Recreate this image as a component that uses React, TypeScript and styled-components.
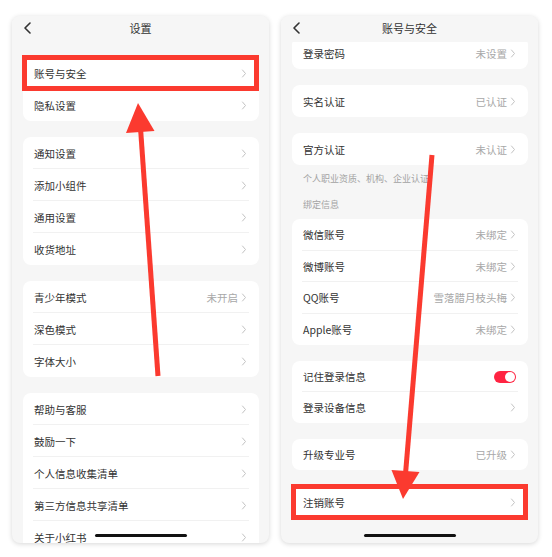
import React from "react";
import styled, { createGlobalStyle } from "styled-components";

const GlobalStyle = createGlobalStyle`
  html, body {
    margin: 0;
    padding: 0;
    background: #ffffff;
  }
  body {
    font-family: "Noto Sans CJK SC", "Noto Sans", sans-serif;
    color: #333333;
  }
`;

type Item = {
  label: string;
  value?: string;
  toggle?: boolean;
  marked?: boolean;
};

const leftGroups: Item[][] = [
  [{ label: "账号与安全", marked: true }, { label: "隐私设置" }],
  [
    { label: "通知设置" },
    { label: "添加小组件" },
    { label: "通用设置" },
    { label: "收货地址" },
  ],
  [
    { label: "青少年模式", value: "未开启" },
    { label: "深色模式" },
    { label: "字体大小" },
  ],
  [
    { label: "帮助与客服" },
    { label: "鼓励一下" },
    { label: "个人信息收集清单" },
    { label: "第三方信息共享清单" },
    { label: "关于小红书" },
  ],
];

const bindList: Item[] = [
  { label: "微信账号", value: "未绑定" },
  { label: "微博账号", value: "未绑定" },
  { label: "QQ账号", value: "雪落腊月枝头梅" },
  { label: "Apple账号", value: "未绑定" },
];

const Chevron = () => (
  <svg width="6" height="9" viewBox="0 0 6 9">
    <polyline
      points="1.5,1 4.5,4.5 1.5,8"
      fill="none"
      stroke="#c2c2c2"
      strokeWidth="1"
      strokeLinecap="round"
      strokeLinejoin="round"
    />
  </svg>
);

const BackIcon = () => (
  <svg width="9" height="12" viewBox="0 0 9 12">
    <polyline
      points="7,1 2,6 7,11"
      fill="none"
      stroke="#333"
      strokeWidth="1.6"
      strokeLinecap="round"
      strokeLinejoin="round"
    />
  </svg>
);

const Row = ({ item, last, h }: { item: Item; last: boolean; h: number }) => (
  <SRow $marked={item.marked} $last={last} $h={h}>
    <SLabel>{item.label}</SLabel>
    <SRight>
      {item.value && <SValue>{item.value}</SValue>}
      {item.toggle ? (
        <SToggle>
          <SKnob />
        </SToggle>
      ) : (
        <Chevron />
      )}
    </SRight>
  </SRow>
);

const Card = ({ items, mt, h = 32 }: { items: Item[]; mt?: number; h?: number }) => (
  <SCard $mt={mt}>
    {items.map((it, i) => (
      <Row key={it.label} item={it} h={h} last={i === items.length - 1} />
    ))}
  </SCard>
);

export default function App() {
  return (
    <>
      <GlobalStyle />
      <SStage>
        <SPhone>
          <SHeader>
            <SBack>
              <BackIcon />
            </SBack>
            <STitle>设置</STitle>
          </SHeader>
          <SBody>
            <SList>
              {leftGroups.map((g, i) => (
                <Card key={i} items={g} />
              ))}
            </SList>
          </SBody>
          <SHomeBar />
        </SPhone>

        <SPhone>
          <SHeader>
            <SBack>
              <BackIcon />
            </SBack>
            <STitle>账号与安全</STitle>
          </SHeader>
          <SBody>
            <SList $scroll={20}>
              <Card items={[{ label: "登录密码", value: "未设置" }]} />
              <Card items={[{ label: "实名认证", value: "已认证" }]} />
              <SGroup>
                <Card items={[{ label: "官方认证", value: "未认证" }]} />
                <SNote $mt={8}>个人职业资质、机构、企业认证</SNote>
                <SNote $mt={14}>绑定信息</SNote>
                <Card items={bindList} mt={8} h={31.5} />
              </SGroup>
              <Card
                h={31}
                items={[
                  { label: "记住登录信息", toggle: true },
                  { label: "登录设备信息" },
                ]}
              />
              <Card h={31} items={[{ label: "升级专业号", value: "已升级" }]} />
              <Card items={[{ label: "注销账号", marked: true }]} />
            </SList>
          </SBody>
          <SHomeBar />
        </SPhone>

        <SArrows width="552" height="557" viewBox="0 0 552 557">
          <line
            x1="158"
            y1="376"
            x2="140.5"
            y2="128"
            stroke="#fb3a2f"
            strokeWidth="5"
          />
          <polygon points="138,103 154.5,131 126,133" fill="#fb3a2f" />
          <line
            x1="432"
            y1="155"
            x2="405.5"
            y2="474"
            stroke="#fb3a2f"
            strokeWidth="5"
          />
          <polygon points="403,499 419.5,472 391.5,470" fill="#fb3a2f" />
        </SArrows>
      </SStage>
    </>
  );
}

const SStage = styled.div`
  position: relative;
  width: 552px;
  height: 557px;
  display: flex;
  gap: 12px;
  padding: 16px 0 0 12px;
  box-sizing: border-box;
`;

const SPhone = styled.div`
  position: relative;
  width: 257px;
  height: 527px;
  display: flex;
  flex-direction: column;
  background: #f6f6f6;
  border-radius: 8px;
  box-shadow: 0 1px 5px rgba(0, 0, 0, 0.16);
  overflow: hidden;
`;

const SHeader = styled.div`
  position: relative;
  height: 26px;
  flex: none;
  display: flex;
  align-items: flex-start;
  justify-content: center;
  background: #f6f6f6;
`;

const SBack = styled.div`
  position: absolute;
  left: 11px;
  top: 6px;
  display: flex;
`;

const STitle = styled.div`
  font-size: 11px;
  line-height: 14px;
  color: #333;
  padding-top: 5px;
`;

const SBody = styled.div`
  flex: 1;
  overflow: hidden;
`;

const SList = styled.div<{ $scroll?: number }>`
  display: flex;
  flex-direction: column;
  gap: 16px;
  padding: 15px 10px 0 11px;
  margin-top: ${(p) => -(p.$scroll || 0)}px;
`;

const SGroup = styled.div`
  display: flex;
  flex-direction: column;
`;

const SCard = styled.div<{ $mt?: number }>`
  background: #ffffff;
  border-radius: 8px;
  margin-top: ${(p) => p.$mt || 0}px;
`;

const SRow = styled.div<{ $marked?: boolean; $last: boolean; $h: number }>`
  position: relative;
  height: ${(p) => p.$h}px;
  display: flex;
  align-items: center;
  justify-content: space-between;
  padding: 0 12px 0 11px;
  &::before {
    content: "";
    display: ${(p) => (p.$last ? "none" : "block")};
    position: absolute;
    left: 10px;
    right: 10px;
    bottom: 0;
    height: 1px;
    background: #f1f1f1;
  }
  &::after {
    content: "";
    display: ${(p) => (p.$marked ? "block" : "none")};
    position: absolute;
    top: -2px;
    left: -1px;
    right: 0;
    bottom: -2px;
    border: 5px solid #fb3a2f;
  }
`;

const SLabel = styled.span`
  font-size: 10.5px;
  color: #333;
`;

const SRight = styled.div`
  display: flex;
  align-items: center;
  gap: 3px;
`;

const SValue = styled.span`
  font-size: 10.5px;
  color: #a8a8a8;
`;

const SToggle = styled.div`
  width: 22px;
  height: 12px;
  border-radius: 6px;
  background: #ff2442;
  display: flex;
  align-items: center;
  justify-content: flex-end;
  padding: 0 1px;
  box-sizing: border-box;
`;

const SKnob = styled.div`
  width: 10px;
  height: 10px;
  border-radius: 50%;
  background: #ffffff;
`;

const SNote = styled.div<{ $mt: number }>`
  margin-top: ${(p) => p.$mt}px;
  padding-left: 11px;
  font-size: 9px;
  line-height: 12px;
  color: #a3a3a3;
`;

const SHomeBar = styled.div`
  position: absolute;
  left: 50%;
  bottom: 6px;
  width: 92px;
  height: 3px;
  margin-left: -46px;
  border-radius: 2px;
  background: #111;
`;

const SArrows = styled.svg`
  position: absolute;
  left: 0;
  top: 0;
  pointer-events: none;
`;
